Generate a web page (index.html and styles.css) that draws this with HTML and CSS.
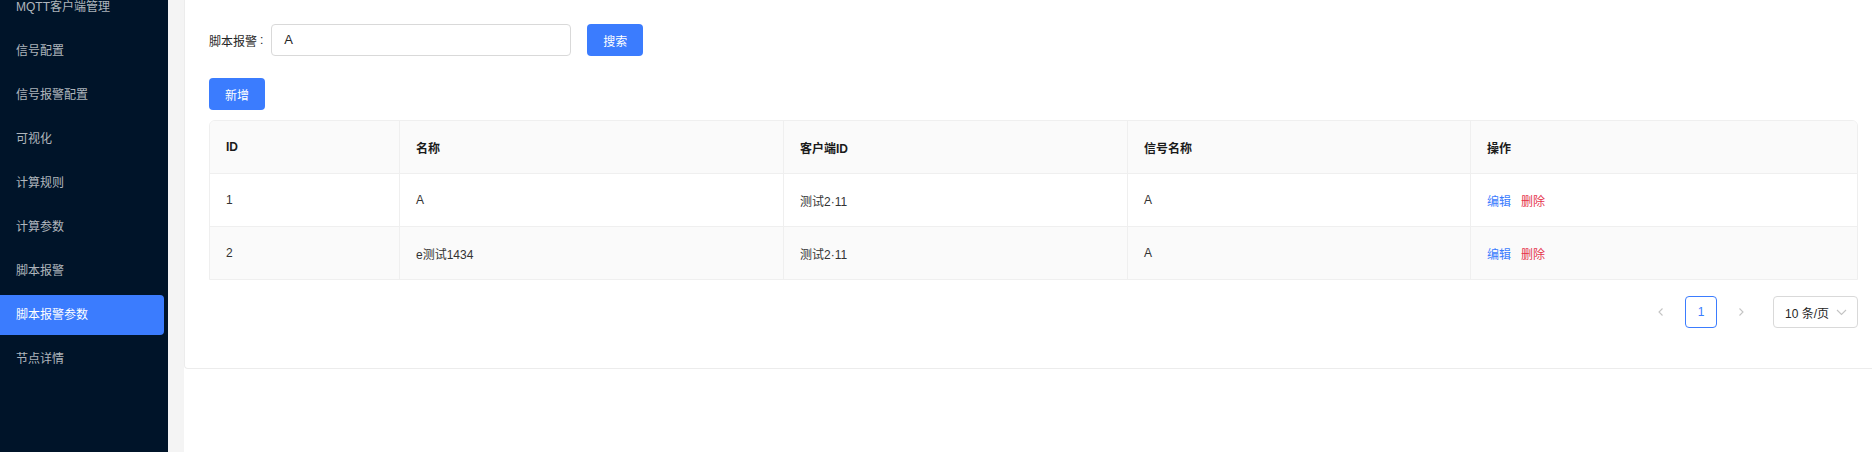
FILE: index.html
```html
<!DOCTYPE html>
<html lang="zh">
<head>
<meta charset="utf-8">
<title>脚本报警参数</title>
<link rel="stylesheet" href="styles.css">
</head>
<body>
<div class="layout">
  <aside class="sider">
    <ul class="menu">
      <li class="menu-item">MQTT客户端管理</li>
      <li class="menu-item">信号配置</li>
      <li class="menu-item">信号报警配置</li>
      <li class="menu-item">可视化</li>
      <li class="menu-item">计算规则</li>
      <li class="menu-item">计算参数</li>
      <li class="menu-item">脚本报警</li>
      <li class="menu-item active">脚本报警参数</li>
      <li class="menu-item">节点详情</li>
    </ul>
  </aside>
  <div class="gutter"></div>
  <main class="main">
    <section class="card">
      <form class="search-form">
        <label class="form-label">脚本报警<span class="colon">:</span></label>
        <div class="input">A</div>
        <button type="button" class="btn btn-primary btn-search">搜索</button>
      </form>
      <div class="toolbar">
        <button type="button" class="btn btn-primary">新增</button>
      </div>
      <div class="table">
        <div class="row head">
          <div class="cell">ID</div>
          <div class="cell">名称</div>
          <div class="cell">客户端ID</div>
          <div class="cell">信号名称</div>
          <div class="cell">操作</div>
        </div>
        <div class="row">
          <div class="cell">1</div>
          <div class="cell">A</div>
          <div class="cell">测试2·11</div>
          <div class="cell">A</div>
          <div class="cell"><span class="link edit">编辑</span><span class="link del">删除</span></div>
        </div>
        <div class="row striped last">
          <div class="cell">2</div>
          <div class="cell">e测试1434</div>
          <div class="cell">测试2·11</div>
          <div class="cell">A</div>
          <div class="cell"><span class="link edit">编辑</span><span class="link del">删除</span></div>
        </div>
      </div>
      <div class="pagination">
        <span class="page-arrow">
          <svg width="10" height="10" viewBox="0 0 10 10"><path d="M6.5 1.5 L3 5 L6.5 8.5" fill="none" stroke="#c4c4c4" stroke-width="1.1"/></svg>
        </span>
        <span class="page-item current">1</span>
        <span class="page-arrow">
          <svg width="10" height="10" viewBox="0 0 10 10"><path d="M3.5 1.5 L7 5 L3.5 8.5" fill="none" stroke="#c4c4c4" stroke-width="1.1"/></svg>
        </span>
        <span class="page-size">10 条/页
          <svg class="chev" width="11" height="8" viewBox="0 0 11 8"><path d="M1 2 L5.5 6.5 L10 2" fill="none" stroke="#c4c4c4" stroke-width="1.1"/></svg>
        </span>
      </div>
    </section>
  </main>
</div>
</body>
</html>
```

FILE: styles.css
```css
* { box-sizing: border-box; }
html, body { margin: 0; padding: 0; }
body {
  width: 1872px;
  height: 452px;
  overflow: hidden;
  font-family: "Liberation Sans", "Noto Sans CJK SC", sans-serif;
  font-size: 12px;
  color: #262626;
  background: #fff;
}
.layout { display: flex; height: 452px; }

.sider { width: 168px; flex: none; background: #001429; overflow: hidden; }
.menu { list-style: none; margin: -13px 0 0 0; padding: 0; }
.menu-item {
  height: 40px;
  line-height: 40px;
  margin-bottom: 4px;
  padding-left: 16px;
  width: 164px;
  color: rgba(255,255,255,0.7);
  font-size: 12px;
  border-radius: 0 4px 4px 0;
}
.menu-item.active { background: #3b7cfe; color: #fff; }

.gutter { width: 16px; flex: none; background: #f4f4f4; }

.main { flex: 1; background: #fff; min-width: 0; }
.card {
  border-left: 1px solid #ececec;
  border-bottom: 1px solid #ececec;
  border-bottom-left-radius: 4px;
  padding: 24px 14px 40px 24px;
}

.search-form { display: flex; align-items: center; height: 32px; margin: 0; }
.form-label { color: #262626; display: flex; align-items: center; }
.colon { margin: 0 8px 0 3px; }
.input {
  width: 300px;
  height: 32px;
  border: 1px solid #d9d9d9;
  border-radius: 4px;
  padding: 0 12px;
  line-height: 30px;
  font-size: 13px;
  color: #262626;
}
.btn {
  height: 32px;
  width: 56px;
  border: none;
  border-radius: 4px;
  font-family: inherit;
  font-size: 12px;
  padding: 0;
}
.btn-primary { background: #3b7cfe; color: #fff; }
.btn-search { margin-left: 16px; }

.toolbar { margin-top: 22px; height: 32px; display: flex; }

.table {
  margin-top: 10px;
  border: 1px solid #efefef;
  border-radius: 6px 6px 0 0;
  overflow: hidden;
}
.row {
  display: grid;
  grid-template-columns: 190px 384px 344px 343px 1fr;
  height: 53px;
  border-bottom: 1px solid #efefef;
  background: #fff;
}
.row.last { border-bottom: none; height: 52px; }
.row.head { background: #fafafa; font-weight: 600; color: #1a1a1a; }
.row.striped { background: #fafafa; }
.cell {
  display: flex;
  align-items: center;
  padding: 0 16px;
  border-right: 1px solid #efefef;
  color: #333;
}
.row.head .cell { color: #1a1a1a; }
.cell:last-child { border-right: none; }
.link { margin-right: 10px; }
.link.edit { color: #3b7cfe; }
.link.del { color: #e5334b; }

.pagination {
  margin-top: 16px;
  display: flex;
  justify-content: flex-end;
  align-items: center;
  height: 32px;
}
.page-arrow {
  width: 32px;
  height: 32px;
  display: flex;
  align-items: center;
  justify-content: center;
}
.page-item {
  width: 32px;
  height: 32px;
  margin: 0 8px;
  border: 1px solid #3b7cfe;
  border-radius: 4px;
  color: #3b7cfe;
  display: flex;
  align-items: center;
  justify-content: center;
  font-size: 12px;
}
.page-size {
  margin-left: 16px;
  width: 85px;
  height: 32px;
  border: 1px solid #d9d9d9;
  border-radius: 4px;
  display: flex;
  align-items: center;
  padding-left: 11px;
  color: #262626;
  font-size: 12px;
  white-space: nowrap;
}
.chev { margin-left: 7px; }
```
